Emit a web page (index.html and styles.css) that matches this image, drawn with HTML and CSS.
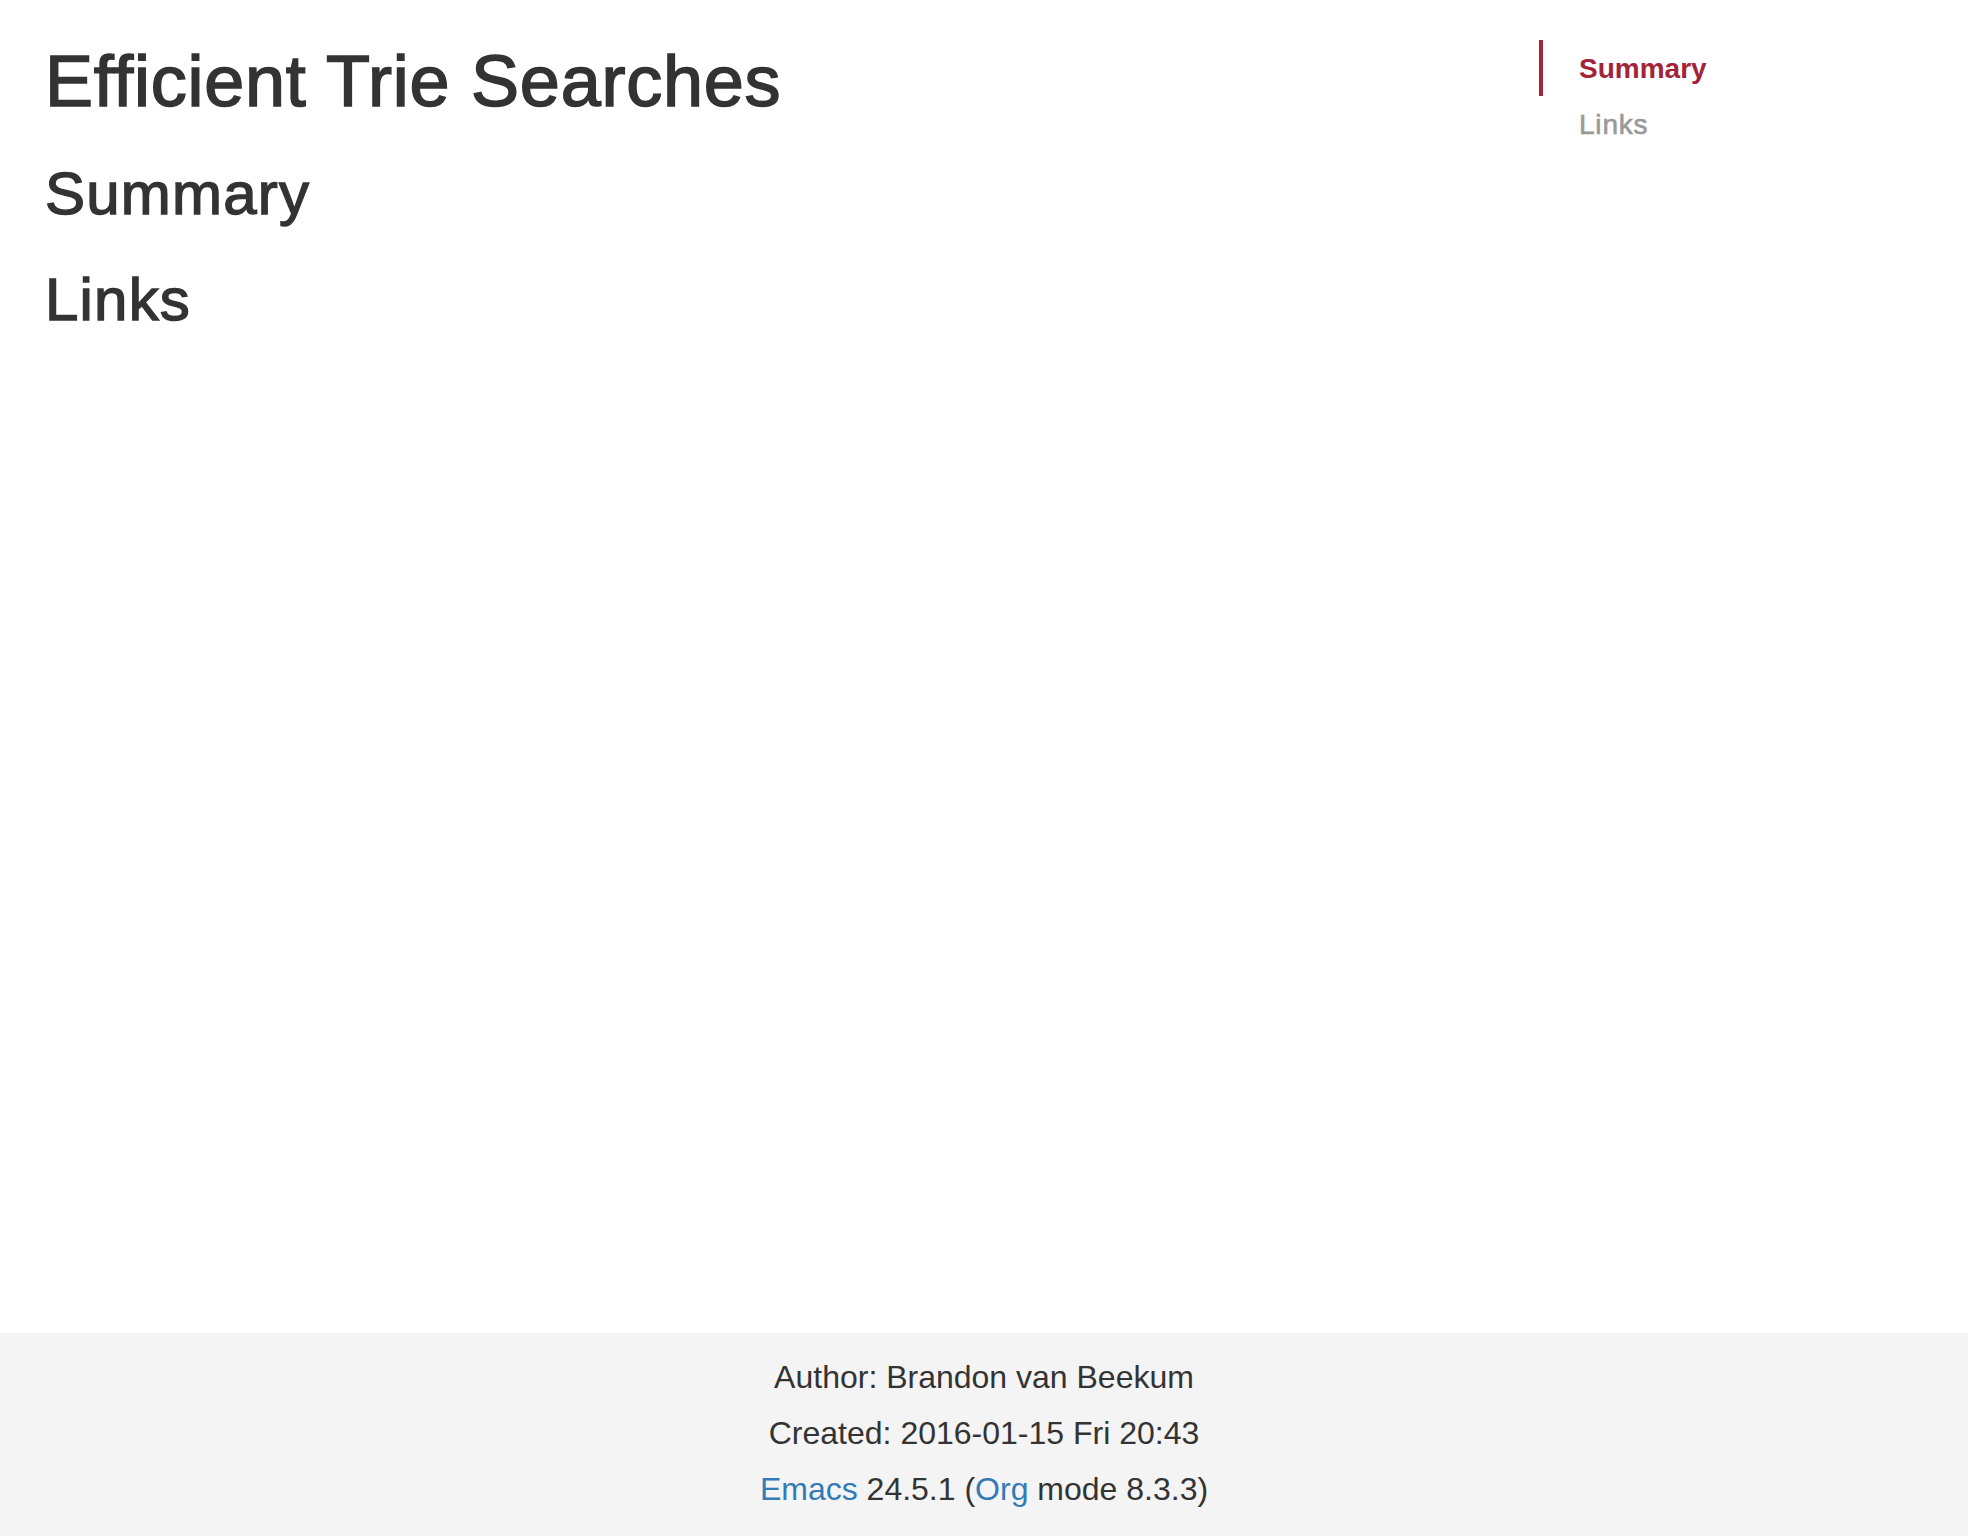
FILE: index.html
```html
<!DOCTYPE html>
<html lang="en">
<head>
<meta charset="utf-8">
<title>Efficient Trie Searches</title>
<link rel="stylesheet" href="styles.css">
</head>
<body>
<div class="page">
  <div class="layout">
    <main class="content">
      <h1 class="title">Efficient Trie Searches</h1>
      <h2 class="section" id="summary">Summary</h2>
      <h2 class="section" id="links">Links</h2>
    </main>
    <nav class="toc">
      <ul class="toc-list">
        <li class="toc-item active"><a href="#summary">Summary</a></li>
        <li class="toc-item"><a href="#links">Links</a></li>
      </ul>
    </nav>
  </div>
  <footer class="postamble">
    <p class="line">Author: Brandon van Beekum</p>
    <p class="line">Created: 2016-01-15 Fri 20:43</p>
    <p class="line"><a class="ext" href="#">Emacs</a> 24.5.1 (<a class="ext" href="#">Org</a> mode 8.3.3)</p>
  </footer>
</div>
</body>
</html>
```
FILE: styles.css
```css
html, body {
  margin: 0;
  padding: 0;
  background: #ffffff;
}

body {
  font-family: "Liberation Sans", Arial, Helvetica, sans-serif;
  color: #333333;
}

.page {
  min-height: 100vh;
  display: flex;
  flex-direction: column;
}

.layout {
  flex: 1;
  display: flex;
  flex-direction: row;
}

.content {
  flex: 1;
  padding: 42px 0 0 45px;
}

.title {
  margin: 0;
  font-size: 72px;
  line-height: 79px;
  font-weight: 500;
  letter-spacing: 0.75px;
  -webkit-text-stroke: 1.6px #333333;
  color: #333333;
}

.section {
  margin: 40px 0 0 0;
  font-size: 60px;
  line-height: 66px;
  font-weight: 500;
  letter-spacing: 1.2px;
  -webkit-text-stroke: 1.4px #333333;
  color: #333333;
}

.toc {
  width: 429px;
  padding-top: 40px;
}

.toc-list {
  list-style: none;
  margin: 0;
  padding: 0;
}

.toc-item a {
  display: block;
  border-left: 4px solid transparent;
  padding: 9px 0 7px 36px;
  font-size: 28px;
  line-height: 40px;
  color: #999999;
  letter-spacing: 0.8px;
  -webkit-text-stroke: 0.6px #999999;
  text-decoration: none;
}

.toc-item.active a {
  border-left-color: #a3233b;
  color: #a3233b;
  font-weight: 700;
  letter-spacing: 0;
  -webkit-text-stroke: 0;
}

.postamble {
  background: #f4f4f4;
  text-align: center;
  padding: 16px 0 19px 0;
  font-size: 32px;
}

.line {
  margin: 0;
  line-height: 56px;
}

.ext {
  color: #337ab7;
  text-decoration: none;
}
```
